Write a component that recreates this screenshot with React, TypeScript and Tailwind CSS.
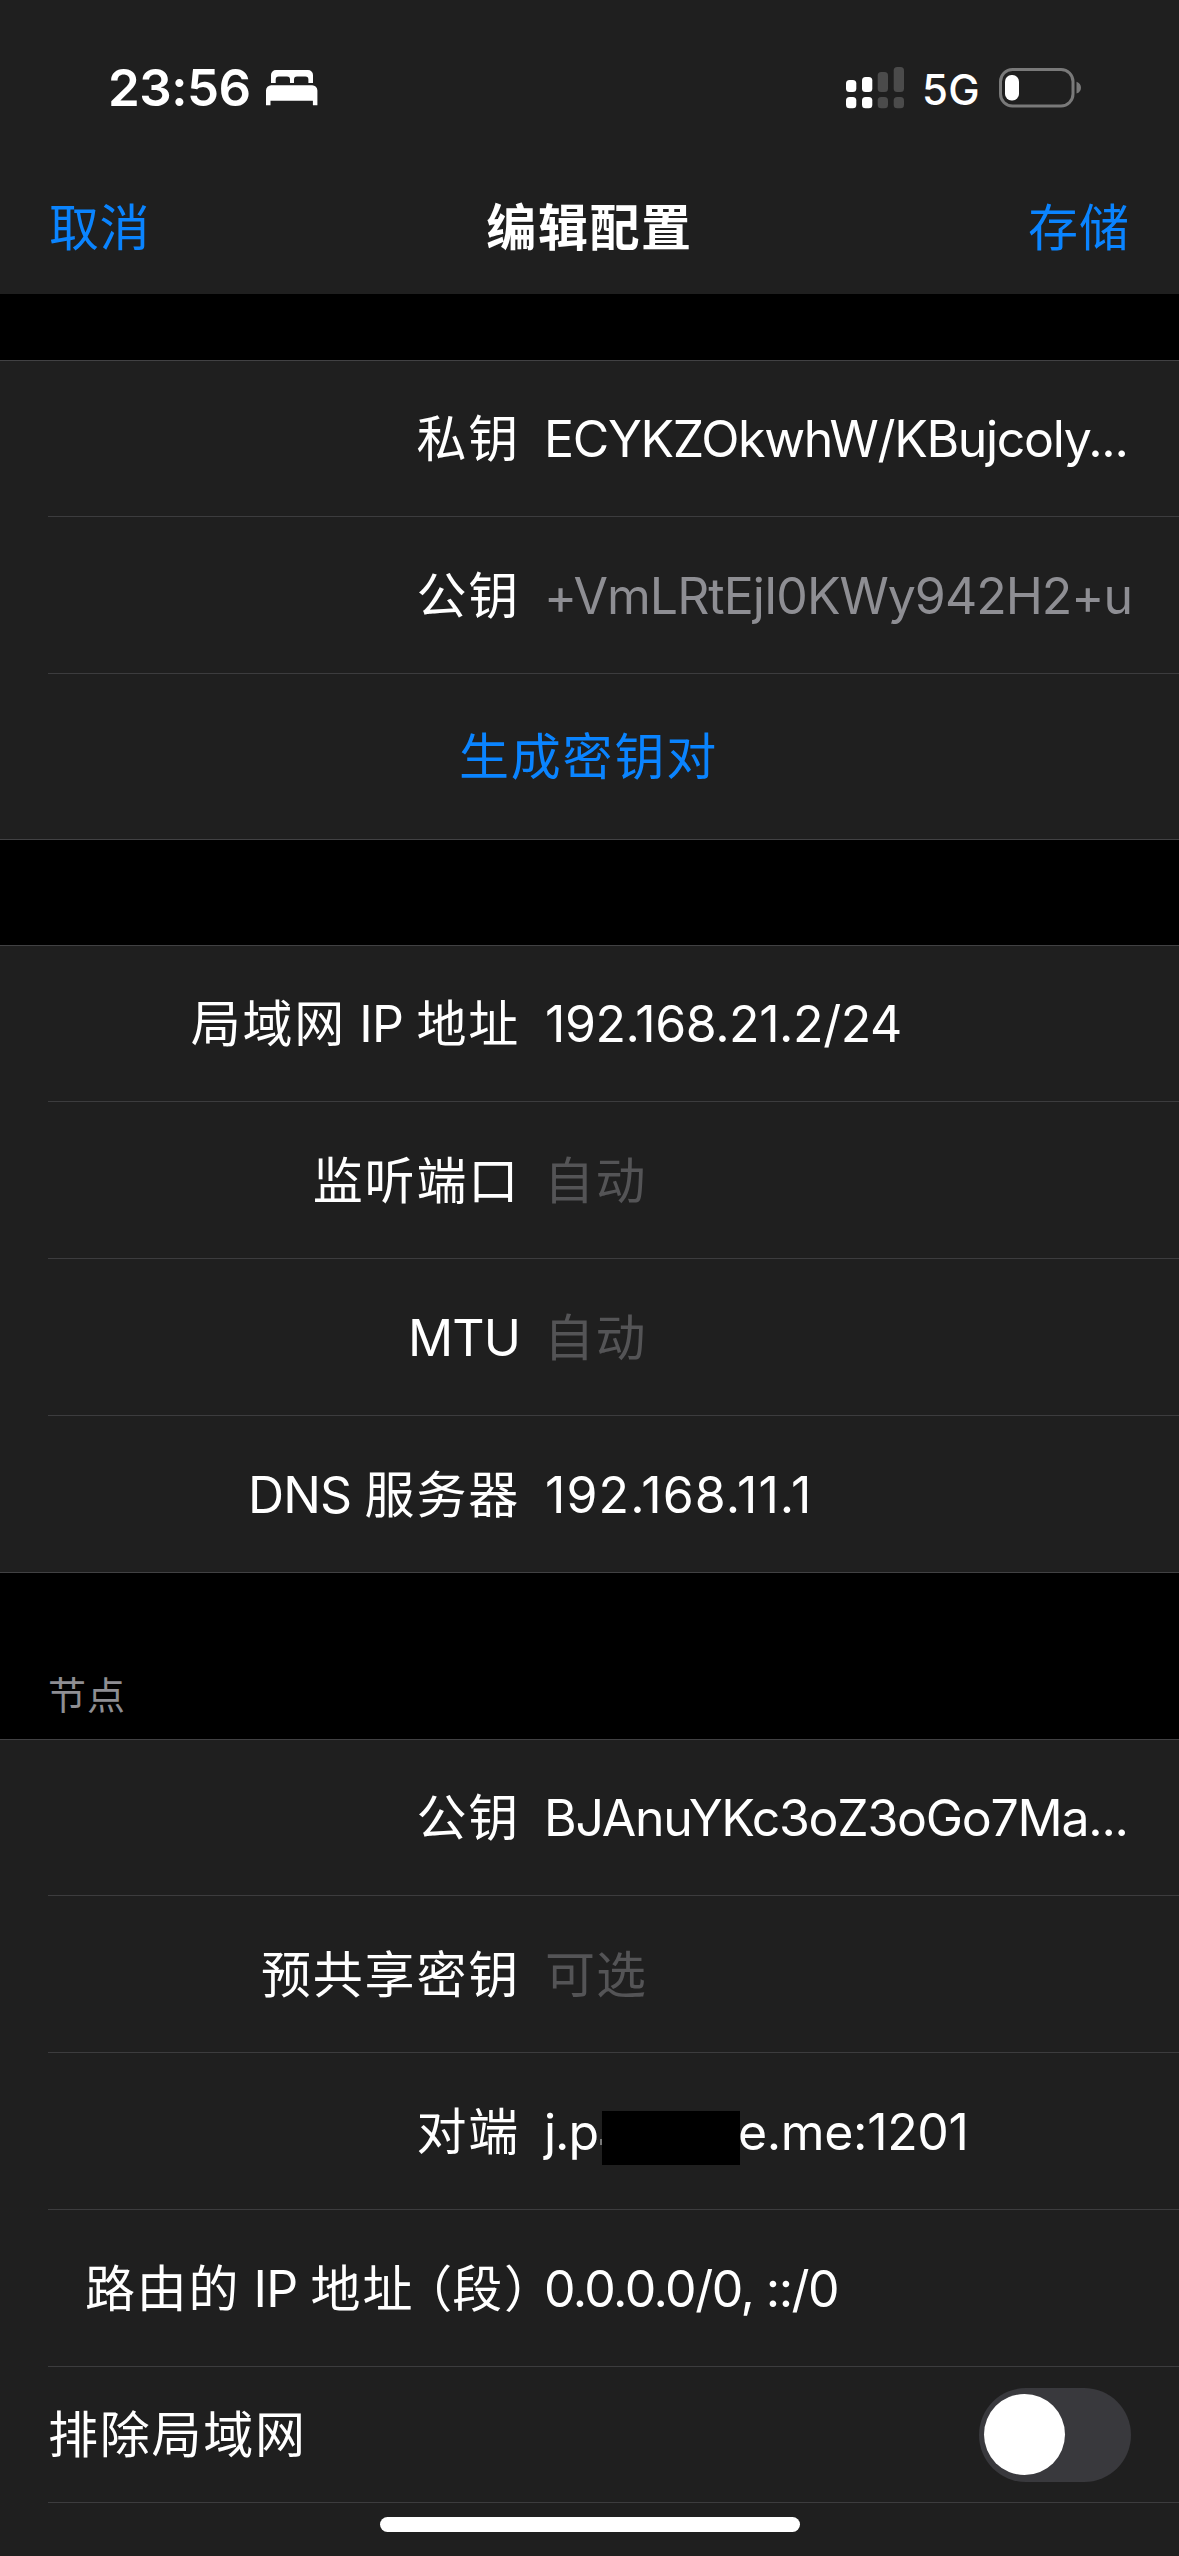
import type { ReactNode } from "react";

function Latin({ children }: { children: ReactNode }) {
  return <span className="tracking-[-0.8px]">{children}</span>;
}

function Row({
  label,
  last,
  tint = "text-white",
  children,
  height = "h-[156px]",
}: {
  label: ReactNode;
  last?: boolean;
  tint?: string;
  children: ReactNode;
  height?: string;
}) {
  return (
    <div className={`flex ${height} shrink-0 pl-12`}>
      <div
        className={`flex flex-1 items-center gap-6 pt-px whitespace-pre ${last ? "" : "border-b border-[#3c3c3e]"}`}
      >
        <span className="w-[472px] shrink-0 text-right tracking-[1.8px] whitespace-pre">{label}</span>
        <span className={`flex items-center ${tint}`}>{children}</span>
      </div>
    </div>
  );
}

function Group({ children, bottom = true }: { children: ReactNode; bottom?: boolean }) {
  return (
    <section
      className={`flex flex-col bg-[#1f1f1f] border-t border-[#414143] ${bottom ? "border-b" : "grow"}`}
    >
      {children}
    </section>
  );
}

function BedIcon() {
  return (
    <svg width="52" height="36" viewBox="0 0 52 36" fill="white">
      <path d="M5 13V5a5 5 0 0 1 5-5h32a5 5 0 0 1 5 5v8h-4.6V9.500a3 3 0 0 0-3-3H31a3 3 0 0 0-3 3V13h-4V9.500a3 3 0 0 0-3-3h-8.300a3 3 0 0 0-3 3V13z" />
      <path d="M0 35.300V20.500a5.200 5.200 0 0 1 5.200-5.200h41a5.200 5.200 0 0 1 5.200 5.200v14.800h-4.500v-4.600H4.500v4.600z" />
    </svg>
  );
}

function SignalIcon() {
  return (
    <svg width="58" height="42" viewBox="0 0 58 42">
      <g fill="white">
        <rect x="0" y="13" width="10.300" height="12" rx="3.500" />
        <rect x="16" y="10" width="10.300" height="15" rx="3.500" />
        <rect x="0" y="30" width="10.300" height="11.300" rx="3.500" />
        <rect x="16" y="30" width="10.300" height="11.300" rx="3.500" />
      </g>
      <g fill="#4b4b4b">
        <rect x="31.700" y="5" width="10.300" height="20" rx="3.500" />
        <rect x="47.700" y="0" width="10.300" height="25" rx="3.500" />
        <rect x="31.700" y="30" width="10.300" height="11.300" rx="3.500" />
        <rect x="47.700" y="30" width="10.300" height="11.300" rx="3.500" />
      </g>
    </svg>
  );
}

function BatteryIcon() {
  return (
    <svg width="82" height="40" viewBox="0 0 82 40">
      <rect x="1.500" y="1.500" width="72.500" height="36.500" rx="12" fill="none" stroke="#797979" strokeWidth="3" />
      <rect x="6" y="7" width="14" height="25.500" rx="6.500" fill="white" />
      <path d="M77.500 13.800c2.900 1 4.500 3.100 4.500 5.900s-1.600 4.900-4.500 5.900z" fill="#797979" />
    </svg>
  );
}

export default function App() {
  return (
    <div className="relative flex h-[2556px] w-[1179px] flex-col overflow-hidden bg-black font-['Inter','Noto_Sans_CJK_SC',sans-serif] text-[50px] leading-[60px] text-white">
      <header className="h-[294px] shrink-0 bg-[#1f1f1f]">
        <div className="flex h-44 items-center justify-between pr-[98px] pl-[108px]">
          <div className="flex items-center gap-[15px]">
            <span className="text-[51px] font-semibold tracking-[-0.5px]">23:56</span>
            <BedIcon />
          </div>
          <div className="flex items-center">
            <SignalIcon />
            <span className="pt-1 pr-[19px] pl-[18px] text-[42px] font-medium tracking-[0.34px]">5G</span>
            <BatteryIcon />
          </div>
        </div>
        <nav className="grid h-[102px] grid-cols-3 items-center pt-0.5 pr-[49px] pl-[49px]">
          <button className="text-left tracking-[0.6px] text-[#0a84ff]">取消</button>
          <h1 className="text-center font-bold tracking-[1.6px]">编辑配置</h1>
          <button className="text-right tracking-[1px] text-[#0a84ff]">存储</button>
        </nav>
      </header>

      <div className="h-[66px] shrink-0" />

      <Group>
        <Row label="私钥">
          <span className="tracking-[-1.33px]">ECYKZOkwhW/KBujcoly...</span>
        </Row>
        <Row label="公钥" tint="text-[#8e8e93]" height="h-[157px]">
          <span className="tracking-[-0.99px]">+VmLRtEjI0KWy942H2+u</span>
        </Row>
        <div className="flex h-[165px] items-center justify-center pt-px pr-0.5">
          <button className="tracking-[1.8px] text-[#0a84ff]">生成密钥对</button>
        </div>
      </Group>

      <div className="h-[105px] shrink-0" />

      <Group>
        <Row label={<>局域网<Latin> IP </Latin>地址</>}>
          <span className="pl-px tracking-[-0.42px]">192.168.21.2/24</span>
        </Row>
        <Row label="监听端口" tint="text-[#545456]" height="h-[157px]">
          <span className="tracking-[1.5px]">自动</span>
        </Row>
        <Row label={<span className="tracking-[-0.9px]">MTU</span>} tint="text-[#545456]" height="h-[157px]">
          <span className="tracking-[1.5px]">自动</span>
        </Row>
        <Row label={<><Latin>DNS </Latin>服务器</>} last>
          <span className="pl-px tracking-[1.1px]">192.168.11.1</span>
        </Row>
      </Group>

      <div className="h-[166px] shrink-0 px-12 pt-[103px] text-[38px] leading-[38px] tracking-[1px] text-[#8e8e93]">
        节点
      </div>

      <Group bottom={false}>
        <Row label="公钥">
          <span className="tracking-[-1.27px]">BJAnuYKc3oZ3oGo7Ma...</span>
        </Row>
        <Row label="预共享密钥" tint="text-[#545456]" height="h-[157px]">
          <span className="pl-px tracking-[1px]">可选</span>
        </Row>
        <Row label="对端" height="h-[157px]">
          <span className="w-14 tracking-[-1px]">j.p</span>
          <span className="mt-5 h-1.5 w-0.5 bg-white/40" />
          <span className="mt-3 h-[54px] w-[138px] bg-black" />
          <span className="-ml-0.5 tracking-[-0.35px]">e.me:1201</span>
        </Row>
        <Row
          label={
            <>
              路由的<Latin> IP </Latin>地址
              <span className="ml-[13px] tracking-[0px] [font-feature-settings:'halt']">（</span>段
              <span className="-mr-[9px] tracking-[0px] [font-feature-settings:'halt']">）</span>
            </>
          }
          height="h-[157px]"
        >
          <span className="tracking-[-1.52px]">0.0.0.0/0, ::/0</span>
        </Row>
        <div className="flex h-[136px] shrink-0 pl-12">
          <div className="flex flex-1 items-center justify-between border-b border-[#3c3c3e] pr-12">
            <span className="pt-px tracking-[1.78px]">排除局域网</span>
            <div role="switch" aria-checked="false" className="flex h-[94px] w-[152px] items-center rounded-full bg-[#39393d] px-[5px]">
              <span className="size-[81px] rounded-full bg-white" />
            </div>
          </div>
        </div>
      </Group>

      <div className="absolute bottom-6 left-[380px] h-[15px] w-[420px] rounded-full bg-white" />
    </div>
  );
}
